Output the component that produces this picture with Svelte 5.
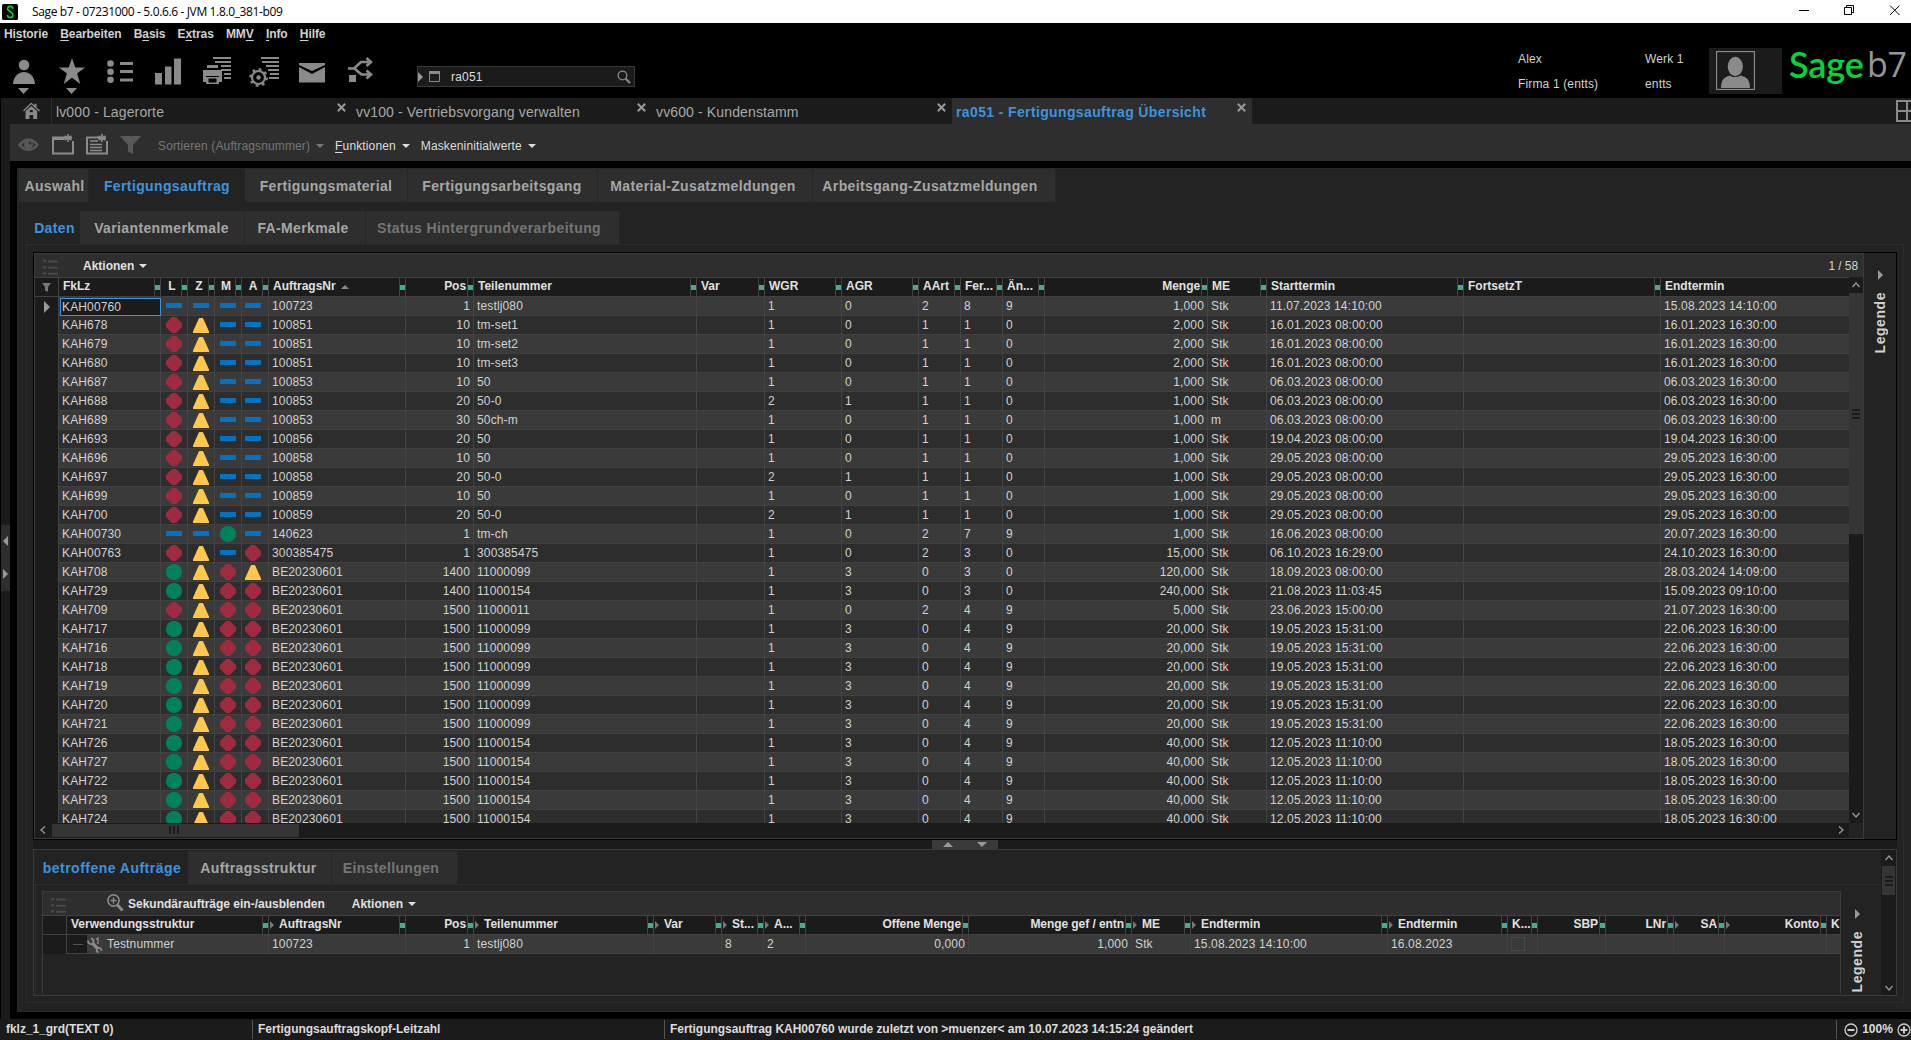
<script lang="ts">
  type Column = { label: string; align?: "right" | "center"; arrow?: boolean; sort?: boolean };

  const menu = [
    ["Hi", "s", "torie"],
    ["", "B", "earbeiten"],
    ["B", "a", "sis"],
    ["E", "x", "tras"],
    ["MM", "V", ""],
    ["", "I", "nfo"],
    ["", "H", "ilfe"],
  ];

  const windows = [
    "lv000 - Lagerorte",
    "vv100 - Vertriebsvorgang verwalten",
    "vv600 - Kundenstamm",
    "ra051 - Fertigungsauftrag Übersicht",
  ];

  const columns: Column[] = [
    { label: "FkLz" },
    { label: "L", align: "center" },
    { label: "Z", align: "center" },
    { label: "M", align: "center" },
    { label: "A", align: "center" },
    { label: "AuftragsNr", sort: true },
    { label: "Pos", align: "right" },
    { label: "Teilenummer" },
    { label: "Var" },
    { label: "WGR" },
    { label: "AGR" },
    { label: "AArt" },
    { label: "Fer..." },
    { label: "Än..." },
    { label: "Menge", align: "right" },
    { label: "ME" },
    { label: "Starttermin" },
    { label: "FortsetzT" },
    { label: "Endtermin" },
  ];

  // fklz | status L Z M A | auftrag | pos | teil | wgr agr aart fert änd | menge | me | start | ende
  const rows = `
KAH00760|dddd|100723|1|testlj080|1 0 2 8 9|1,000|Stk|11.07.2023 14:10:00|15.08.2023 14:10:00
KAH678|rtdd|100851|10|tm-set1|1 0 1 1 0|2,000|Stk|16.01.2023 08:00:00|16.01.2023 16:30:00
KAH679|rtdd|100851|10|tm-set2|1 0 1 1 0|2,000|Stk|16.01.2023 08:00:00|16.01.2023 16:30:00
KAH680|rtdd|100851|10|tm-set3|1 0 1 1 0|2,000|Stk|16.01.2023 08:00:00|16.01.2023 16:30:00
KAH687|rtdd|100853|10|50|1 0 1 1 0|1,000|Stk|06.03.2023 08:00:00|06.03.2023 16:30:00
KAH688|rtdd|100853|20|50-0|2 1 1 1 0|1,000|Stk|06.03.2023 08:00:00|06.03.2023 16:30:00
KAH689|rtdd|100853|30|50ch-m|1 0 1 1 0|1,000|m|06.03.2023 08:00:00|06.03.2023 16:30:00
KAH693|rtdd|100856|20|50|1 0 1 1 0|1,000|Stk|19.04.2023 08:00:00|19.04.2023 16:30:00
KAH696|rtdd|100858|10|50|1 0 1 1 0|1,000|Stk|29.05.2023 08:00:00|29.05.2023 16:30:00
KAH697|rtdd|100858|20|50-0|2 1 1 1 0|1,000|Stk|29.05.2023 08:00:00|29.05.2023 16:30:00
KAH699|rtdd|100859|10|50|1 0 1 1 0|1,000|Stk|29.05.2023 08:00:00|29.05.2023 16:30:00
KAH700|rtdd|100859|20|50-0|2 1 1 1 0|1,000|Stk|29.05.2023 08:00:00|29.05.2023 16:30:00
KAH00730|ddgd|140623|1|tm-ch|1 0 2 7 9|1,000|Stk|16.06.2023 08:00:00|20.07.2023 16:30:00
KAH00763|rtdr|300385475|1|300385475|1 0 2 3 0|15,000|Stk|06.10.2023 16:29:00|24.10.2023 16:30:00
KAH708|gtrt|BE20230601|1400|11000099|1 3 0 3 0|120,000|Stk|18.09.2023 08:00:00|28.03.2024 14:09:00
KAH729|gtrr|BE20230601|1400|11000154|1 3 0 3 0|240,000|Stk|21.08.2023 11:03:45|15.09.2023 09:10:00
KAH709|rtrr|BE20230601|1500|11000011|1 0 2 4 9|5,000|Stk|23.06.2023 15:00:00|21.07.2023 16:30:00
KAH717|gtrr|BE20230601|1500|11000099|1 3 0 4 9|20,000|Stk|19.05.2023 15:31:00|22.06.2023 16:30:00
KAH716|gtrr|BE20230601|1500|11000099|1 3 0 4 9|20,000|Stk|19.05.2023 15:31:00|22.06.2023 16:30:00
KAH718|gtrr|BE20230601|1500|11000099|1 3 0 4 9|20,000|Stk|19.05.2023 15:31:00|22.06.2023 16:30:00
KAH719|gtrr|BE20230601|1500|11000099|1 3 0 4 9|20,000|Stk|19.05.2023 15:31:00|22.06.2023 16:30:00
KAH720|gtrr|BE20230601|1500|11000099|1 3 0 4 9|20,000|Stk|19.05.2023 15:31:00|22.06.2023 16:30:00
KAH721|gtrr|BE20230601|1500|11000099|1 3 0 4 9|20,000|Stk|19.05.2023 15:31:00|22.06.2023 16:30:00
KAH726|gtrr|BE20230601|1500|11000154|1 3 0 4 9|40,000|Stk|12.05.2023 11:10:00|18.05.2023 16:30:00
KAH727|gtrr|BE20230601|1500|11000154|1 3 0 4 9|40,000|Stk|12.05.2023 11:10:00|18.05.2023 16:30:00
KAH722|gtrr|BE20230601|1500|11000154|1 3 0 4 9|40,000|Stk|12.05.2023 11:10:00|18.05.2023 16:30:00
KAH723|gtrr|BE20230601|1500|11000154|1 3 0 4 9|40,000|Stk|12.05.2023 11:10:00|18.05.2023 16:30:00
KAH724|gtrr|BE20230601|1500|11000154|1 3 0 4 9|40,000|Stk|12.05.2023 11:10:00|18.05.2023 16:30:00`
    .trim()
    .split("\n")
    .map((line) => {
      const [fklz, status, nr, pos, teil, codes, menge, me, start, end] = line.split("|");
      return { fklz, status: [...status], nr, pos, teil, codes: codes.split(" "), menge, me, start, end };
    });

  const usageColumns: Column[] = [
    { label: "Verwendungsstruktur" },
    { label: "AuftragsNr", arrow: true },
    { label: "Pos", align: "right" },
    { label: "Teilenummer", arrow: true },
    { label: "Var", arrow: true },
    { label: "St...", arrow: true },
    { label: "A...", arrow: true },
    { label: "Offene Menge", align: "right" },
    { label: "Menge gef / entn", align: "right" },
    { label: "ME", arrow: true },
    { label: "Endtermin", arrow: true },
    { label: "Endtermin", arrow: true },
    { label: "K..." },
    { label: "SBP", align: "right" },
    { label: "LNr", align: "right" },
    { label: "SA", align: "right", arrow: true },
    { label: "Konto", align: "right", arrow: true },
    { label: "Ku" },
  ];
</script>

{#snippet head(col: Column, last: boolean)}
  <div class="th {col.align ?? ''}" class:last>
    {#if col.arrow}<i class="more"></i>{/if}
    <span class="label">{col.label}</span>
    {#if col.sort}<i class="sort"></i>{/if}
    {#if !last}<i class="grip"></i>{/if}
  </div>
{/snippet}

{#snippet mark(kind: string)}
  <div class="td mark">
    <svg width="16" height="16" viewBox="0 0 16 16">
      {#if kind === "d"}
        <rect x="0" y="5" width="16" height="5" fill="#0073c4" />
      {:else if kind === "r"}
        <path d="M6 0h4l6 6v4l-6 6H6l-6-6V6z" fill="#9f2b40" />
      {:else if kind === "t"}
        <path d="M6.6 1h2.8q.6 0 .9.7L16 14.5V16H0v-1.5L5.7 1.7q.3-.7.9-.7z" fill="#ffc84a" />
      {:else}
        <circle cx="8" cy="8" r="8.1" fill="#00815e" />
      {/if}
    </svg>
  </div>
{/snippet}

{#snippet listIcon()}
  <svg class="list-icon" width="15" height="16" viewBox="0 0 15 16" fill="#484848">
    <circle cx="1.7" cy="2" r="1.6" /><circle cx="1.7" cy="8.3" r="1.6" /><circle cx="1.7" cy="14.3" r="1.6" />
    <path d="M5 1.5h10v2H5zM5 7.800h10v2H5zM5 13.800h10v2H5z" />
  </svg>
{/snippet}

{#snippet chevron(d: string)}
  <svg class="chevron" width="10" height="10" viewBox="0 0 10 10" fill="none" stroke="#999" stroke-width="1.3"><path {d} /></svg>
{/snippet}

<div class="app">
  <header class="titlebar">
    <svg width="16" height="16" viewBox="0 0 16 16">
      <rect width="16" height="16" rx="1.5" fill="#000" />
      <path d="M10.8 4.6C10.6 1.6 5.4 1.7 5.6 4.9c.2 2.7 5.2 2.7 5.2 6 0 3.4-5.4 3.4-5.4.2" fill="none" stroke="#00d639" stroke-width="1.7" />
    </svg>
    <span class="caption">Sage b7 - 07231000 - 5.0.6.6 - JVM 1.8.0_381-b09</span>
    <svg class="window-buttons" width="102" height="12" viewBox="0 0 102 12" fill="none" stroke="#000">
      <path d="M0 6.500h10M45.500 3.500h7v7h-7zM47.500 3.500v-2h7v7h-2M91 1.500l9.500 9.500M100.500 1.500L91 11" />
    </svg>
  </header>

  <nav class="menu">
    {#each menu as [before, key, after]}
      <span>{before}<u>{key}</u>{after}</span>
    {/each}
  </nav>

  <div class="banner">
    <svg class="tools" width="380" height="40" viewBox="0 0 380 40" fill="#8a8a8a">
      <circle cx="24" cy="6" r="5.300" />
      <path d="M13 25c1-16 21-16 22 0zM18 29h11l-5.500 6zM66 29h11l-5.500 6z" />
      <path d="M72-1l3.300 9.600H85l-7.900 6 3.200 10.400-8.300-6.300-8.300 6.300 3.200-10.400-7.900-6h9.700z" />
      <circle cx="110.500" cy="4.500" r="3.300" /><circle cx="110.500" cy="12.700" r="3.300" /><circle cx="110.500" cy="20.800" r="3.300" />
      <path d="M120 3h13v3h-13zM120 11h13v3h-13zM120 19.500h13v3h-13z" />
      <path d="M155 14h7v11.500h-7zM165 7.500h6.500v18H165zM174-.5h7v26h-7z" />
      <path d="M213-2h18v2h-18zM215 2h16v2h-16zM221 6h10v2h-10zM221 10h10v2h-10zM224 14h7v2h-7zM224 18h7v2h-7z" />
      <path d="M207 6h11v3h-11zM203 11h19v12h-3v-6h-13v6h-3zM206 18h13v7h-13zm2.500 1.500v4h8v-4z" fill-rule="evenodd" />
      <path d="M261-2h18v2h-18zM262 2h17v2h-17zM266 6h13v2h-13zM268 10h11v2h-11zM270 14h9v2h-9zM269 18h10v2h-10z" />
      <circle cx="258.500" cy="18.500" r="6.500" fill="none" stroke="#8a8a8a" stroke-width="2.200" />
      <circle cx="258.500" cy="18.500" r="8.200" fill="none" stroke="#8a8a8a" stroke-width="2.400" stroke-dasharray="2.600 3.840" />
      <circle cx="258.500" cy="18.500" r="2.200" />
      <path d="M299 4h26v2l-13 6-13-6zM299 8l13 7 13-7v15.500h-26z" />
      <path d="M349 16h7v7h-7z" />
      <path d="M348 9.500h6l7-6.500h8M355 10l6.500 5.500h8M366.500-1l4.500 4-4.500 4M366.500 11.500l4.500 4-4.500 4" fill="none" stroke="#8a8a8a" stroke-width="2.600" />
    </svg>
    <div class="search">
      <i class="handle"></i>
      <svg width="11" height="11" viewBox="0 0 11 11"><path d="M.5 1.500h10v9H.5z" fill="none" stroke="#8a8a8a" /><path d="M0 0h11v3H0z" fill="#8a8a8a" /></svg>
      <span>ra051</span>
      <svg width="14" height="14" viewBox="0 0 14 14" fill="none" stroke="#8a8a8a"><circle cx="5.500" cy="5.500" r="4.300" stroke-width="1.300" /><path d="M8.700 8.700l4.300 4.300" stroke-width="2" /></svg>
    </div>
    <dl class="user"><dt>Alex</dt><dd>Firma 1 (entts)</dd></dl>
    <dl class="site"><dt>Werk 1</dt><dd>entts</dd></dl>
    <div class="avatar">
      <svg width="39" height="39" viewBox="0 0 39 39">
        <rect x=".5" y=".5" width="38" height="38" fill="#1b1b1b" stroke="#8a8a8a" stroke-width="1.300" />
        <ellipse cx="19.300" cy="15.500" rx="7.600" ry="9.700" fill="#8a8a8a" />
        <path d="M5 37c0-8 3-11 9-12.500 3 2 7 2 10.500 0C31 26 34 29 34 37z" fill="#8a8a8a" />
      </svg>
    </div>
    <div class="brand"><span class="sage">Sage</span><span class="b7">b7</span></div>
  </div>

  <div class="window-tabs">
    <div class="home">
      <svg width="17" height="17" viewBox="0 0 17 17" fill="#8a8a8a">
        <path d="M0 8.500L8.300.6l3 2.900V1.800h2.200v3.800L17 8.500l-1 1-7.700-7.200L1 9.500z" />
        <path d="M2.500 9.300l5.800-5.400 5.900 5.400V17h-4v-4H6.500v4h-4z" /><path d="M6.800 8h3v2.200h-3z" fill="#1b1b1b" />
      </svg>
    </div>
    {#each windows as title, i}
      <div class="window-tab" class:active={i === 3}>
        <span>{title}</span>
        <svg width="9" height="9" viewBox="0 0 9 9" stroke="#999" stroke-width="2"><path d="M.8.8l7.400 7.400M8.200.8L.8 8.200" /></svg>
      </div>
    {/each}
    <svg class="split" width="15" height="22" viewBox="0 0 15 22" fill="none" stroke="#8a8a8a" stroke-width="2"><path d="M1 1h20v20H1zM11 1v20M1 11h20" /></svg>
  </div>

  <div class="body">
    <aside>
      <div class="collapse"><i class="left"></i><i class="right"></i></div>
    </aside>

    <main>
      <div class="toolbar">
        <svg width="124" height="24" viewBox="0 0 124 24">
          <path d="M0 13c6-9 15-9 21 0-6 8-15 8-21 0z" fill="#585858" />
          <path d="M3.500 13c4.500-6 9.500-6 14 0-4.500 5-9.500 5-14 0z" fill="#2e2e2e" />
          <circle cx="10.500" cy="12.500" r="4.600" fill="#585858" /><circle cx="12" cy="11" r="1.500" fill="#2e2e2e" />
          <path d="M47 5.500H35v16h20V9" fill="none" stroke="#8a8a8a" stroke-width="2" />
          <path d="M34 5h12v3H34z" fill="#8a8a8a" />
          <path d="M50 2v8M46.500 4l7 4M53.500 4l-7 4M46 6h8" stroke="#8a8a8a" stroke-width="1.600" />
          <path d="M81 5.500H69v16h20V9" fill="none" stroke="#8a8a8a" stroke-width="2" />
          <path d="M84 2v8M80.500 4l7 4M87.500 4l-7 4M80 6h8M72 9h8M72 12.500h12M72 15.500h12M72 18.500h12" stroke="#8a8a8a" stroke-width="1.700" />
          <path d="M102 4h21l-8 9v9l-5-2.500V13z" fill="#585858" />
        </svg>
        <span class="disabled">Sortieren (Auftragsnummer)<i class="drop"></i></span>
        <span><u>F</u>unktionen<i class="drop"></i></span>
        <span>Maskeninitialwerte<i class="drop"></i></span>
      </div>

      <div class="panel">
        <div class="tabs main-tabs">
          <span class="tab t-auswahl">Auswahl</span>
          <span class="tab t-auftrag active">Fertigungsauftrag</span>
          <span class="tab t-material">Fertigungsmaterial</span>
          <span class="tab t-gang">Fertigungsarbeitsgang</span>
          <span class="tab t-mat-zusatz">Material-Zusatzmeldungen</span>
          <span class="tab t-gang-zusatz">Arbeitsgang-Zusatzmeldungen</span>
        </div>
        <div class="tabs sub-tabs">
          <span class="tab t-daten active">Daten</span>
          <span class="tab t-varianten">Variantenmerkmale</span>
          <span class="tab t-fa">FA-Merkmale</span>
          <span class="tab t-status off">Status Hintergrundverarbeitung</span>
        </div>

        <div class="content">
          <section class="orders">
            <div class="grid-frame">
              <div class="grid-bar">
                {@render listIcon()}
                <b>Aktionen<i class="drop"></i></b>
                <span class="count">1 / 58</span>
              </div>
              <div class="grid-main">
                <div class="table">
                  <div class="row header">
                    <div class="td gutter">
                      <svg width="9" height="9" viewBox="0 0 9 9" fill="#777"><path d="M0 0h9L6 4v5L3 7.500V4z" /></svg>
                    </div>
                    {#each columns as col, i}
                      {@render head(col, i === columns.length - 1)}
                    {/each}
                  </div>
                  {#each rows as row, i}
                    <div class="row" class:alt={i % 2 === 1}>
                      <div class="td gutter">{#if i === 0}<i class="current"></i>{/if}</div>
                      <div class="td" class:selected={i === 0}>{row.fklz}</div>
                      {#each row.status as kind}{@render mark(kind)}{/each}
                      <div class="td">{row.nr}</div>
                      <div class="td right">{row.pos}</div>
                      <div class="td">{row.teil}</div>
                      <div class="td"></div>
                      {#each row.codes as code}<div class="td">{code}</div>{/each}
                      <div class="td right">{row.menge}</div>
                      <div class="td">{row.me}</div>
                      <div class="td">{row.start}</div>
                      <div class="td"></div>
                      <div class="td">{row.end}</div>
                    </div>
                  {/each}
                </div>
                <div class="vscroll">
                  {@render chevron("M1.500 7l3.500-4 3.500 4")}
                  <div class="thumb"><i></i><i></i><i></i></div>
                  {@render chevron("M1.500 3l3.500 4 3.500-4")}
                </div>
              </div>
              <div class="hscroll">
                {@render chevron("M7 1.500l-4 3.500 4 3.500")}
                <div class="thumb"><i></i><i></i><i></i></div>
                {@render chevron("M3 1.500l4 3.500-4 3.500")}
              </div>
            </div>
            <div class="legend"><i class="right"></i><b>Legende</b></div>
          </section>

          <div class="splitter"><div><i class="up"></i><i class="down"></i></div></div>

          <section class="details">
            <div class="details-main">
              <div class="tabs detail-tabs">
                <span class="tab t-betroffen active">betroffene Aufträge</span>
                <span class="tab t-struktur">Auftragsstruktur</span>
                <span class="tab t-einst off">Einstellungen</span>
              </div>
              <div class="details-body">
                <div class="usage">
                  <div class="grid-bar">
                    {@render listIcon()}
                    <svg class="zoom" width="17" height="18" viewBox="0 0 17 18" fill="none" stroke="#8a8a8a">
                      <circle cx="6.500" cy="6.500" r="5.600" stroke-width="1.600" /><path d="M10.500 11l5 5.500" stroke-width="3" /><path d="M3.500 6.500h6M6.500 3.500v6" stroke-width="1.500" />
                    </svg>
                    <b>Sekundäraufträge ein-/ausblenden</b>
                    <b class="actions">Aktionen<i class="drop"></i></b>
                  </div>
                  <div class="row header">
                    <div class="td gutter"></div>
                    {#each usageColumns as col, i}
                      {@render head(col, i === usageColumns.length - 1)}
                    {/each}
                  </div>
                  <div class="row">
                    <div class="td gutter"></div>
                    <div class="td tree">
                      <i class="branch"></i>
                      <svg width="15" height="16" viewBox="0 0 15 16" fill="none" stroke="#8a8a8a">
                        <path d="M4 1.500C6.500 2 7 4 6 6l5 5c2-.5 3.500.5 3.500 3M1 3.500c0 3 2 4 4.500 3.500l4.500 5c-.5 1.500 0 3 1.500 3.500" stroke-width="1.900" />
                        <path d="M9 2.500L11 1v6" stroke-width="1.400" />
                      </svg>
                      Testnummer
                    </div>
                    <div class="td">100723</div>
                    <div class="td right">1</div>
                    <div class="td">testlj080</div>
                    <div class="td"></div>
                    <div class="td">8</div>
                    <div class="td">2</div>
                    <div class="td right">0,000</div>
                    <div class="td right">1,000</div>
                    <div class="td">Stk</div>
                    <div class="td">15.08.2023 14:10:00</div>
                    <div class="td">16.08.2023</div>
                    <div class="td"><i class="check"></i></div>
                    <div class="td"></div>
                    <div class="td"></div>
                    <div class="td"></div>
                    <div class="td"></div>
                    <div class="td"></div>
                  </div>
                </div>
                <div class="legend"><i class="right"></i><b>Legende</b></div>
              </div>
            </div>
            <div class="vscroll">
              {@render chevron("M1.500 7l3.500-4 3.500 4")}
              <div class="thumb"><i></i><i></i><i></i></div>
              {@render chevron("M1.500 3l3.500 4 3.500-4")}
            </div>
          </section>
        </div>
      </div>
    </main>
  </div>

  <footer>
    <span class="field">fklz_1_grd(TEXT 0)</span>
    <span class="hint">Fertigungsauftragskopf-Leitzahl</span>
    <span class="message">Fertigungsauftrag KAH00760 wurde zuletzt von &gt;muenzer&lt; am 10.07.2023 14:15:24 geändert</span>
    <span class="scale">
      <svg width="14" height="14" viewBox="0 0 14 14" fill="none" stroke="#ccc"><circle cx="7" cy="7" r="6" stroke-width="1.300" /><path d="M3.500 7h7" stroke-width="2" /></svg>
      100%
      <svg width="14" height="14" viewBox="0 0 14 14" fill="none" stroke="#ccc"><circle cx="7" cy="7" r="6" stroke-width="1.300" /><path d="M3.500 7h7M7 3.500v7" stroke-width="2" /></svg>
    </span>
  </footer>
</div>

<style>
  :global(body) {
    overflow: hidden;
    background: #000;
  }

  .app {
    display: flex;
    flex-direction: column;
    width: 1911px;
    height: 1040px;
    overflow: hidden;
    color: #d2d2d2;
    background: #000;
    font-family: "Liberation Sans", Arial, sans-serif;
    font-size: 12px;
    line-height: 14px;
    white-space: nowrap;
  }

  .app :global(svg) { display: block; flex: none; }
  i { display: block; flex: none; font-style: normal; }
  u { text-underline-offset: 2px; }

  /* window chrome */
  .titlebar {
    display: flex;
    align-items: center;
    height: 23px;
    box-sizing: border-box;
    padding: 0 10px 0 2px;
    color: #000;
    background: #fff;
    font-family: "Open Sans", "Noto Sans", sans-serif;
  }
  .caption { margin-left: 14px; letter-spacing: -0.36px; }
  .window-buttons { margin: -3px 0 0 auto; }

  .menu {
    display: flex;
    gap: 12.2px;
    height: 23px;
    box-sizing: border-box;
    padding: 0 0 2px 4px;
    align-items: center;
    font-weight: bold;
    letter-spacing: -0.08px;
  }

  .banner { display: flex; height: 52px; }
  .tools { margin-top: 13px; overflow: visible; }
  .search {
    display: flex;
    align-items: center;
    width: 218px;
    height: 21px;
    margin: 20px 0 0 37px;
    box-sizing: border-box;
    border: 1px solid #383838;
    background: #1b1b1b;
  }
  .search span { flex: 1; margin-left: 11px; color: #ddd; letter-spacing: 0.2px; }
  .search svg:last-child { margin-right: 3px; }
  .handle {
    width: 0;
    margin-right: 6px;
    border: 5px solid transparent;
    border-left-color: #999;
    border-right-width: 0;
  }
  dl { margin: 6px 0 0; }
  dd { margin: 11px 0 0; }
  .user { width: 127px; margin-left: 883px; letter-spacing: 0.15px; }
  .site { width: 64px; letter-spacing: 0.15px; }
  .avatar {
    width: 73px;
    height: 46px;
    margin-top: 2px;
    box-sizing: border-box;
    padding: 3px 0 0 7px;
    background: #1b1b1b;
  }
  .brand { display: flex; margin-left: 7px; line-height: 36px; }
  .sage { width: 78px; color: #00d639; font-family: Lato, sans-serif; font-size: 36px; font-weight: 600; letter-spacing: -0.1px; }
  .b7 { color: #969696; font-family: "Open Sans", sans-serif; font-size: 34px; font-weight: 400; letter-spacing: -0.4px; }

  .window-tabs { display: flex; height: 26px; margin-left: 1px; background: #1b1b1b; }
  .home {
    width: 51px;
    box-sizing: border-box;
    padding: 4px 0 0 22px;
    border-right: 1px solid #2e2e2e;
  }
  .window-tab {
    display: flex;
    justify-content: space-between;
    align-items: center;
    width: 300px;
    box-sizing: border-box;
    padding: 2px 6px 0 4px;
    color: #a8a8a8;
    font-size: 14px;
    line-height: 18px;
    letter-spacing: 0.13px;
  }
  .window-tab svg { margin-top: -9px; }
  .window-tab.active { color: #3d94dc; background: #2e2e2e; font-weight: bold; letter-spacing: 0.37px; }
  .split { margin: 2px 0 0 auto; }

  .body { display: flex; height: 895px; }
  aside { width: 9px; margin-left: 1px; background: #1b1b1b; }
  .collapse {
    display: flex;
    flex-direction: column;
    justify-content: space-between;
    align-items: center;
    height: 66px;
    margin-top: 401px;
    box-sizing: border-box;
    padding: 11px 0 12px;
    background: #2e2e2e;
  }
  i.left, i.right { width: 0; border: 5px solid transparent; }
  i.left { border-left-width: 0; border-right-color: #999; }
  i.right { border-right-width: 0; border-left-color: #999; }

  main { width: 1901px; }
  .toolbar {
    display: flex;
    align-items: center;
    height: 37px;
    box-sizing: border-box;
    padding: 6px 0 0 8px;
    background: #2e2e2e;
    letter-spacing: 0.13px;
  }
  .toolbar svg { margin: -4px 16px 0 0; }
  .toolbar span { display: flex; align-items: center; margin-right: 11px; color: #ddd; }
  .toolbar .disabled { color: #777; }
  .drop {
    width: 0;
    margin-left: 6px;
    border: 4px solid transparent;
    border-top-color: currentColor;
    border-bottom-width: 0;
  }

  /* tab strips */
  .panel {
    height: 844px;
    margin: 7px 0 0 7px;
    box-sizing: border-box;
    border: 1px solid #2a2a2a;
    border-right: 0;
    background: #232323;
  }
  .tabs { display: flex; font-size: 14px; font-weight: bold; letter-spacing: 0.37px; }
  .tab {
    height: 33px;
    box-sizing: border-box;
    border-right: 1px solid #262626;
    color: #a6a6a6;
    background: #2e2e2e;
    line-height: 34px;
    text-align: center;
  }
  .tab.active { color: #3d94dc; background: #232323; border: 0; }
  .tab.off { color: #757575; }
  .main-tabs { padding-left: 1px; }
  .t-auswahl { width: 70px; padding-left: 2px; }
  .t-auftrag { width: 156px; }
  .t-material { width: 163px; }
  .t-gang { width: 190px; padding-right: 1px; }
  .t-mat-zusatz { width: 215px; padding-right: 4px; }
  .t-gang-zusatz { width: 243px; padding-right: 8px; }
  .sub-tabs { margin-top: 9px; padding-left: 9px; }
  .t-daten { width: 53px; padding-left: 2px; }
  .t-varianten { width: 165px; padding-right: 1px; }
  .t-fa { width: 121px; padding-right: 4px; }
  .t-status { width: 254px; padding-right: 7px; letter-spacing: 0.42px; }

  .content {
    width: 1878px;
    height: 759px;
    margin-left: 8px;
    box-sizing: border-box;
    padding: 7px 0 0 6px;
    border: 1px solid #2c2c2c;
  }

  /* grids */
  .orders {
    display: flex;
    width: 1864px;
    height: 588px;
    box-sizing: border-box;
    border: 1px solid #000;
  }
  .grid-frame { width: 1830px; box-sizing: border-box; border: 1px solid #3a3a3a; }
  .grid-bar {
    display: flex;
    align-items: center;
    height: 23px;
    box-sizing: border-box;
    padding: 1px 5px 0 8px;
    background: #2e2e2e;
  }
  .grid-bar b { display: flex; align-items: center; color: #e0e0e0; }
  .grid-bar .drop { margin-left: 5px; }
  .list-icon { margin-top: 2px; }
  .orders .grid-bar b { margin-left: 25px; }
  .count { margin-left: auto; letter-spacing: -0.1px; }

  .grid-main { display: flex; height: 546px; }
  .table { width: 1814px; overflow: hidden; }
  .row {
    display: grid;
    height: 19px;
    box-sizing: border-box;
    border-bottom: 1px solid #414141;
    background: #3a3a3a;
  }
  .row.alt { background: #2d2d2d; }
  .table .row {
    grid-template-columns: 24px 102px 27px 27px 27px 27px 137px 68px 223px 68px 77px 77px 42px 42px 42px 163px 59px 197px 197px 1fr;
  }
  .row.header {
    height: 20px;
    border-top: 1px solid #414141;
    color: #e0e0e0;
    background: #1b1b1b;
    font-weight: bold;
  }
  .td {
    min-width: 0;
    padding: 0 3px;
    border-right: 1px solid #444;
    line-height: 19px;
    letter-spacing: 0.14px;
  }
  .td:last-child { border-right: 0; }
  .td.right { text-align: right; }
  .td.gutter { display: grid; place-items: center; background: #1b1b1b; }
  .td.mark { padding: 1px 0 0 5px; }
  .td.mark:nth-child(6) { padding-left: 3px; }
  .td.selected {
    margin: 1px 0 0 1px;
    padding-left: 1px;
    border: 1px solid #3d94dc;
    background: #1b1b1b;
    line-height: 16px;
  }
  .current { width: 0; border: 6px solid transparent; border-left-color: #999; border-right-width: 0; }

  .th {
    display: flex;
    align-items: center;
    min-width: 0;
    padding-left: 4px;
    border-right: 1px solid #444;
    overflow: hidden;
  }
  .label { padding-bottom: 2px; }
  .th.right { justify-content: flex-end; }
  .th.center { justify-content: center; padding-left: 2px; }
  .th.last { border-right: 0; }
  .th:not(.right, .center) .grip { margin-left: auto; }
  .th.center .label { flex: 1; text-align: center; }
  .th.right .label { margin-right: 1px; letter-spacing: -0.07px; }
  .grip {
    width: 5px;
    height: 18px;
    border-left: 1px solid #444;
    background: linear-gradient(#46ab93, #46ab93) 0 7px / 5px 5px no-repeat;
  }
  .sort { width: 0; margin-left: 5px; border: 4px solid transparent; border-bottom-color: #8a8a8a; border-top-width: 0; }
  .more { width: 0; margin: 0 5px 0 -3px; border: 4px solid transparent; border-left-color: #777; border-right-width: 0; }
  .th.right .more { margin-right: auto; }

  .vscroll {
    display: flex;
    flex-direction: column;
    align-items: center;
    width: 14px;
    background: #1b1b1b;
  }
  .vscroll .thumb {
    display: flex;
    flex-direction: column;
    justify-content: center;
    gap: 2px;
    align-items: center;
    width: 14px;
    background: #353535;
  }
  .vscroll i { width: 8px; height: 2px; background: #1b1b1b; }
  .grid-main .vscroll { padding: 3px 0 3px; box-sizing: border-box; }
  .grid-main .thumb { height: 241px; margin: 3px 0 auto; }

  .hscroll {
    display: flex;
    align-items: center;
    height: 15px;
    box-sizing: border-box;
    padding: 0 3px 1px 3px;
    margin-right: 14px;
    background: #1b1b1b;
  }
  .hscroll .thumb {
    display: flex;
    justify-content: center;
    align-items: center;
    gap: 2px;
    width: 247px;
    height: 13px;
    margin: 0 auto 0 4px;
    box-sizing: border-box;
    padding-right: 4px;
    background: #353535;
  }
  .hscroll i { width: 2px; height: 8px; background: #1b1b1b; }

  .legend { display: flex; flex-direction: column; align-items: center; width: 32px; box-sizing: border-box; padding-top: 17px; }
  .legend b {
    margin-top: 12px;
    font-size: 14px;
    line-height: 16px;
    letter-spacing: 0.55px;
    writing-mode: vertical-rl;
    transform: rotate(180deg);
  }

  .splitter { display: flex; height: 9px; padding-left: 899px; width: 965px; background: #1b1b1b; }
  .splitter div {
    display: flex;
    justify-content: space-between;
    align-items: center;
    width: 66px;
    box-sizing: border-box;
    padding: 0 11px;
    background: #3a3a3a;
  }
  .up, .down { width: 0; border: 5px solid transparent; }
  .up { border-top-width: 0; border-bottom-color: #999; }
  .down { border-bottom-width: 0; border-top-color: #999; }

  .details {
    display: flex;
    width: 1864px;
    height: 147px;
    box-sizing: border-box;
    border: 1px solid #3a3a3a;
  }
  .details-main { width: 1847px; }
  .detail-tabs { padding: 1px 0 0 2px; border-bottom: 1px solid #2c2c2c; }
  .t-betroffen { width: 152px; letter-spacing: 0.48px; }
  .t-struktur { width: 144px; padding-right: 2px; }
  .t-einst { width: 126px; padding-right: 7px; }
  .details-body { display: flex; height: 110px; margin-left: 1px; border-left: 1px solid #2c2c2c; }
  .usage {
    width: 1799px;
    height: 103px;
    margin: 6px 0 0 6px;
    box-sizing: border-box;
    border: 1px solid #3a3a3a;
    border-bottom: 0;
  }
  .usage .row {
    grid-template-columns: 24px 202px 137px 68px 180px 68px 42px 42px 163px 163px 59px 197px 120px 30px 68px 68px 51px 102px 1fr;
  }
  .usage .row:not(.header) .td { border-right-color: #424242; }
  .zoom { margin: -2px 4px 0 41px; }
  .actions { margin-left: 27px; }
  .td.tree { display: flex; align-items: center; padding: 0; background: linear-gradient(#1b1b1b, #1b1b1b) 0 0 / 20px 18px no-repeat; }
  .branch { width: 10px; height: 1px; margin: 0 4px 0 6px; background: #555; }
  .tree svg { margin-right: 5px; }
  .check { width: 12px; height: 12px; margin-top: 2px; border: 1px solid #4a4a4a; }
  .details .legend { width: 38px; padding: 24px 6px 0 0; }
  .details > .vscroll { width: 15px; box-sizing: border-box; padding: 3px 0 2px; }
  .details > .vscroll .thumb { width: 13px; height: 29px; margin: 3px 0 auto; }

  footer {
    display: flex;
    align-items: center;
    height: 21px;
    color: #dcdcdc;
    background: #1b1b1b;
    font-weight: bold;
    letter-spacing: -0.03px;
  }
  footer span { height: 19px; box-sizing: border-box; line-height: 19px; }
  .field { width: 252px; padding-left: 6px; }
  .hint { width: 412px; padding-left: 5px; border-left: 1px solid #555; }
  .message { width: 1172px; padding-left: 5px; border-left: 1px solid #555; }
  .scale { display: flex; flex: 1; align-items: center; justify-content: space-between; padding-left: 7px; border-left: 1px solid #555; }
</style>
